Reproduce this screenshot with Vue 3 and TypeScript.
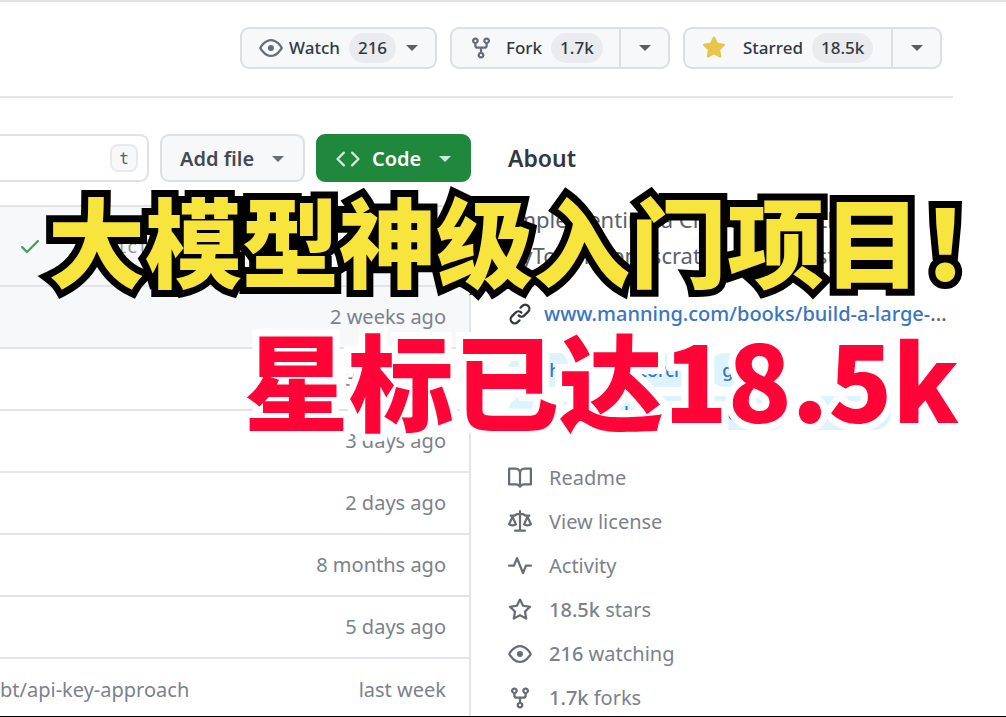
<script setup lang="ts">
interface FileRow { message: string; time: string; latest?: boolean }
interface Stat { icon: string; count?: string; label: string }

const star = 'M8 .25a.75.75 0 0 1 .673.418l1.882 3.815 4.21.612a.75.75 0 0 1 .416 1.279l-3.046 2.97.719 4.192a.751.751 0 0 1-1.088.791L8 12.347l-3.766 1.98a.75.75 0 0 1-1.088-.79l.72-4.194L.818 6.374a.75.75 0 0 1 .416-1.28l4.21-.611L7.327.668A.75.75 0 0 1 8 .25Z'

const icons: Record<string, string> = {
  eye: 'M8 2c1.981 0 3.671.992 4.933 2.078 1.27 1.091 2.187 2.345 2.637 3.023a1.62 1.62 0 0 1 0 1.798c-.45.678-1.367 1.932-2.637 3.023C11.67 13.008 9.981 14 8 14s-3.671-.992-4.933-2.078C1.797 10.83.88 9.576.43 8.898a1.62 1.62 0 0 1 0-1.798c.45-.677 1.367-1.931 2.637-3.022C4.33 2.992 6.019 2 8 2ZM1.679 7.932a.12.12 0 0 0 0 .136c.411.622 1.241 1.75 2.366 2.717C5.176 11.758 6.527 12.5 8 12.5s2.825-.742 3.955-1.715c1.124-.967 1.954-2.096 2.366-2.717a.12.12 0 0 0 0-.136c-.412-.621-1.242-1.75-2.366-2.717C10.824 4.242 9.473 3.5 8 3.5s-2.825.742-3.955 1.715c-1.124.967-1.954 2.096-2.366 2.717ZM8 10a2 2 0 1 1 .001-3.999A2 2 0 0 1 8 10Z',
  fork: 'M5 5.372v.878c0 .414.336.75.75.75h4.5a.75.75 0 0 0 .75-.75v-.878a2.25 2.25 0 1 1 1.5 0v.878a2.25 2.25 0 0 1-2.25 2.25h-1.5v2.128a2.251 2.251 0 1 1-1.5 0V8.5h-1.5A2.25 2.25 0 0 1 3.5 6.25v-.878a2.25 2.25 0 1 1 1.5 0ZM5 3.25a.75.75 0 1 0-1.5 0 .75.75 0 0 0 1.5 0Zm6.75.75a.75.75 0 1 0 0-1.5.75.75 0 0 0 0 1.5Zm-3 8.75a.75.75 0 1 0-1.5 0 .75.75 0 0 0 1.5 0Z',
  starFill: star,
  star: star + 'm0 2.445L6.615 5.5a.75.75 0 0 1-.564.41l-3.097.45 2.24 2.184a.75.75 0 0 1 .216.664l-.528 3.084 2.769-1.456a.75.75 0 0 1 .698 0l2.77 1.456-.53-3.084a.75.75 0 0 1 .216-.664l2.24-2.183-3.096-.45a.75.75 0 0 1-.564-.41L8 2.694Z',
  book: 'M0 1.75A.75.75 0 0 1 .75 1h4.253c1.227 0 2.317.59 3 1.501A3.743 3.743 0 0 1 11.006 1h4.245a.75.75 0 0 1 .75.75v10.5a.75.75 0 0 1-.75.75h-4.507a2.25 2.25 0 0 0-1.591.659l-.622.621a.75.75 0 0 1-1.06 0l-.622-.621A2.25 2.25 0 0 0 5.258 13H.75a.75.75 0 0 1-.75-.75Zm7.251 10.324.004-5.073-.002-2.253A2.25 2.25 0 0 0 5.003 2.5H1.5v9h3.757a3.75 3.75 0 0 1 1.994.574ZM8.755 4.75l-.004 7.322a3.752 3.752 0 0 1 1.992-.572H14.5v-9h-3.495a2.25 2.25 0 0 0-2.25 2.25Z',
  law: 'M8.75.75V2h.985c.304 0 .603.08.867.231l1.29.736c.038.022.08.033.124.033h2.234a.75.75 0 0 1 0 1.5h-.427l2.111 4.692a.75.75 0 0 1-.154.838l-.53-.53.529.531-.001.002-.002.002-.006.006-.006.005-.01.01-.045.04c-.21.176-.441.327-.686.45C14.556 10.78 13.88 11 13 11a4.498 4.498 0 0 1-2.023-.454 3.544 3.544 0 0 1-.686-.45l-.045-.04-.016-.015-.006-.006-.004-.004v-.001a.75.75 0 0 1-.154-.838L12.178 4.5h-.162c-.305 0-.604-.079-.868-.231l-1.29-.736a.245.245 0 0 0-.124-.033H8.75V13h2.5a.75.75 0 0 1 0 1.5h-6.5a.75.75 0 0 1 0-1.5h2.5V3.5h-.984a.245.245 0 0 0-.124.033l-1.289.737c-.265.15-.564.23-.869.23h-.162l2.112 4.692a.75.75 0 0 1-.154.838l-.53-.53.529.531-.001.002-.002.002-.006.006-.016.015-.045.04c-.21.176-.441.327-.686.45C4.556 10.78 3.88 11 3 11a4.498 4.498 0 0 1-2.023-.454 3.544 3.544 0 0 1-.686-.45l-.045-.04-.016-.015-.006-.006-.004-.004v-.001a.75.75 0 0 1-.154-.838L2.178 4.5H1.75a.75.75 0 0 1 0-1.5h2.234a.249.249 0 0 0 .125-.033l1.288-.737c.265-.15.564-.23.869-.23h.984V.75a.75.75 0 0 1 1.5 0Zm2.945 8.477c.285.135.718.273 1.305.273s1.02-.138 1.305-.273L13 6.327Zm-10 0c.285.135.718.273 1.305.273s1.02-.138 1.305-.273L3 6.327Z',
  pulse: 'M6 2c.306 0 .582.187.696.471L10 10.731l1.304-3.26A.751.751 0 0 1 12 7h3.25a.75.75 0 0 1 0 1.5h-2.742l-1.812 4.528a.751.751 0 0 1-1.392 0L6 4.77 4.696 8.03A.75.75 0 0 1 4 8.5H.75a.75.75 0 0 1 0-1.5h2.742l1.812-4.529A.751.751 0 0 1 6 2Z',
  link: 'm7.775 3.275 1.25-1.25a3.5 3.5 0 1 1 4.95 4.95l-2.5 2.5a3.5 3.5 0 0 1-4.95 0 .751.751 0 0 1 .018-1.042.751.751 0 0 1 1.042-.018 1.998 1.998 0 0 0 2.83 0l2.5-2.5a2.002 2.002 0 0 0-2.83-2.83l-1.25 1.25a.751.751 0 0 1-1.042-.018.751.751 0 0 1-.018-1.042Zm-4.69 9.64a1.998 1.998 0 0 0 2.83 0l1.25-1.25a.751.751 0 0 1 1.042.018.751.751 0 0 1 .018 1.042l-1.25 1.25a3.5 3.5 0 1 1-4.95-4.95l2.5-2.5a3.5 3.5 0 0 1 4.95 0 .751.751 0 0 1-.018 1.042.751.751 0 0 1-1.042.018 1.998 1.998 0 0 0-2.83 0l-2.5 2.5a1.998 1.998 0 0 0 0 2.83Z',
  code: 'm11.28 3.22 4.25 4.25a.75.75 0 0 1 0 1.06l-4.25 4.25a.749.749 0 0 1-1.275-.326.749.749 0 0 1 .215-.734L13.94 8l-3.72-3.72a.749.749 0 0 1 .326-1.275.749.749 0 0 1 .734.215Zm-6.56 0a.751.751 0 0 1 1.042.018.751.751 0 0 1 .018 1.042L2.06 8l3.72 3.72a.749.749 0 0 1-.326 1.275.749.749 0 0 1-.734-.215L.47 8.53a.75.75 0 0 1 0-1.06Z',
  check: 'M13.78 4.22a.75.75 0 0 1 0 1.06l-7.25 7.25a.75.75 0 0 1-1.06 0L2.22 9.28a.751.751 0 0 1 .018-1.042.751.751 0 0 1 1.042-.018L6 10.94l6.72-6.72a.75.75 0 0 1 1.06 0Z',
}

const rows: FileRow[] = [
  { message: '', time: '2 weeks ago', latest: true },
  { message: '', time: '3 days ago' },
  { message: '', time: '3 days ago' },
  { message: '', time: '2 days ago' },
  { message: '', time: '8 months ago' },
  { message: '', time: '5 days ago' },
  { message: 'bt/api-key-approach', time: 'last week' },
]

const topicLines: string[][] = [['python', 'pytorch', 'gpt'], ['ai', 'large-language-models', 'chatgpt']]

const stats: Stat[] = [
  { icon: 'book', label: 'Readme' },
  { icon: 'law', label: 'View license' },
  { icon: 'pulse', label: 'Activity' },
  { icon: 'star', count: '18.5k', label: 'stars' },
  { icon: 'eye', count: '216', label: 'watching' },
  { icon: 'fork', count: '1.7k', label: 'forks' },
]
</script>

<template>
  <div class="page">
    <header class="actions">
      <button class="btn watch" type="button">
        <svg class="icon" viewBox="0 0 16 16"><path :d="icons.eye" /></svg>
        <span>Watch</span><span class="counter">216</span><i class="caret"></i>
      </button>
      <div class="group">
        <button class="btn fork" type="button">
          <svg class="icon" viewBox="0 0 16 16"><path :d="icons.fork" /></svg>
          <span>Fork</span><span class="counter">1.7k</span>
        </button>
        <button class="btn more" type="button" aria-label="Fork options"><i class="caret"></i></button>
      </div>
      <div class="group">
        <button class="btn starred" type="button">
          <svg class="icon gold" viewBox="0 0 16 16"><path :d="icons.starFill" /></svg>
          <span>Starred</span><span class="counter">18.5k</span>
        </button>
        <button class="btn more" type="button" aria-label="Star options"><i class="caret"></i></button>
      </div>
    </header>

    <div class="columns">
      <main>
        <div class="toolbar">
          <label class="search">
            <input type="text" aria-label="Go to file" />
            <kbd>t</kbd>
          </label>
          <button class="btn tool" type="button">Add file<i class="caret"></i></button>
          <button class="btn tool code" type="button">
            <svg class="icon" viewBox="0 0 16 16"><path :d="icons.code" /></svg>Code<i class="caret"></i>
          </button>
        </div>
        <div class="files">
          <div class="commit">
            <svg class="icon check" viewBox="0 0 16 16"><path :d="icons.check" /></svg>
            <span class="hash">ict</span>
          </div>
          <table>
            <tbody>
              <tr v-for="(row, i) in rows" :key="i" :class="{ latest: row.latest }">
                <td>{{ row.message }}</td>
                <td class="time">{{ row.time }}</td>
              </tr>
            </tbody>
          </table>
        </div>
      </main>

      <aside>
        <h2>About</h2>
        <p>Implementing a ChatGPT-like LLM in PyTorch from scratch, step by step</p>
        <div class="site">
          <svg class="icon" viewBox="0 0 16 16"><path :d="icons.link" /></svg>
          <a href="#">www.manning.com/books/build-a-large-<span>...</span></a>
        </div>
        <div class="topics">
          <div v-for="(line, i) in topicLines" :key="i" class="line">
            <a v-for="t in line" :key="t" href="#">{{ t }}</a>
          </div>
        </div>
        <ul>
          <li v-for="s in stats" :key="s.label">
            <svg class="icon" viewBox="0 0 16 16"><path :d="icons[s.icon]" /></svg>
            <a href="#"><b v-if="s.count">{{ s.count }}</b> {{ s.label }}</a>
          </li>
        </ul>
      </aside>
    </div>

    <div class="title yellow">大模型神级入门项目！</div>
    <div class="title red">星标已达18.5k</div>
  </div>
</template>

<style>
body { background: #fff; }
</style>

<style scoped>
.page {
  box-sizing: border-box;
  position: relative;
  height: 100vh;
  overflow: hidden;
  border-top: 2px solid #e4e4e4;
  border-bottom: 1px solid #000;
  background: #fff;
  color: #32383f;
  font: 20px/30px "Noto Sans", sans-serif;
}
.page * { box-sizing: border-box; }
.icon { width: 24px; height: 24px; fill: #656d76; flex: none; }
.actions {
  display: flex;
  justify-content: flex-end;
  gap: 13px;
  margin-right: 53px;
  padding: 25px 11px 27px 0;
  border-bottom: 2px solid #e3e5e7;
}
.group { display: flex; }
.btn {
  display: flex;
  align-items: center;
  height: 42px;
  padding: 0;
  border: 2px solid #dbe0e5;
  border-radius: 9px;
  background: #f6f8fa;
  color: #32383f;
  font: 500 17px/24px "Noto Sans", sans-serif;
  white-space: nowrap;
}
.watch { width: 197px; padding-left: 17px; gap: 6px; }
.watch .counter { margin-left: 3px; }
.watch .caret { margin-left: 4px; }
.group .btn:first-child { border-radius: 9px 0 0 9px; }
.group .more { width: 50px; margin-left: -1px; justify-content: center; border-left-width: 1px; border-radius: 0 9px 9px 0; }
.fork { width: 171px; padding-left: 17px; }
.fork .icon { margin-right: 13px; }
.starred { width: 210px; padding-left: 17px; }
.starred .icon { margin-right: 17px; }
.group .counter { margin-left: 9px; }
.gold { fill: #e9c54a; }
.counter { height: 30px; padding: 0 9px; border-radius: 15px; background: #e9ebef; line-height: 29px; }
.caret { width: 0; height: 0; border: 6px solid transparent; border-top-color: currentColor; border-bottom: 0; opacity: .8; }

.columns {
  display: grid;
  grid-template-columns: minmax(0, 1fr) 445px;
  gap: 37px;
  padding: 36px 53px 0 0;
}
.toolbar { display: flex; gap: 11px; margin-bottom: 23px; }
.search {
  display: flex;
  align-items: center;
  flex: 1;
  min-width: 0;
  height: 48px;
  padding-right: 9px;
  border: 2px solid #dfe2e5;
  border-left: 0;
  border-radius: 0 9px 9px 0;
}
.search input { flex: 1; min-width: 0; border: 0; outline: 0; background: none; }
kbd {
  width: 28px;
  height: 28px;
  border: 2px solid #e8eaed;
  border-radius: 8px;
  background: #f6f8fa;
  color: #57606a;
  font: 16px/25px "DejaVu Sans Mono", monospace;
  text-align: center;
}
.tool { width: 145px; height: 48px; padding: 2px 0 0 18px; font-size: 20px; font-weight: 600; color: #424a53; }
.tool .caret { margin-left: 18px; }
.tool.code { width: 155px; border-color: #1f883d; background: #1f883d; color: #fff; }
.tool.code .icon { margin-right: 12px; fill: #d5ead9; }
.files { border-top: 2px solid #e1e4e8; border-right: 2px solid #e1e4e8; }
.commit { display: flex; align-items: center; height: 78px; padding-left: 18px; background: #f6f8fa; color: #8c959f; }
.check { fill: #4a9a61; }
.hash { margin-left: 74px; font: 18px "DejaVu Sans Mono", monospace; }
table { width: 100%; border-collapse: collapse; color: #7a828b; }
tr { height: 62px; border-top: 2px solid #e1e4e8; }
.latest { background: #f6f8fa; }
td { padding: 0; }
.time { padding-right: 23px; text-align: right; }

h2 { margin: 8px 0 27px; font-size: 23px; font-weight: 600; line-height: 32px; }
p { margin: 0 0 26px; font-size: 22px; line-height: 36px; color: #59616a; }
.site { display: flex; align-items: center; gap: 12px; white-space: nowrap; }
.site .icon { fill: #32383f; }
a { color: inherit; text-decoration: none; }
.site a { color: #3a74c4; font-weight: 500; }
.site span { color: #59616a; }
.topics { display: grid; gap: 9px; margin-top: 24px; }
.line { display: flex; gap: 9px; }
.line a { padding: 0 14px; border-radius: 17px; background: #ddf4ff; color: #3a74c4; font-size: 18px; font-weight: 500; line-height: 34px; }
ul { margin: 26px 0 0; padding: 0; list-style: none; color: #7a828b; }
li { display: flex; align-items: center; gap: 17px; height: 44px; }
b { font-weight: 500; }

.title {
  position: absolute;
  white-space: nowrap;
  font-family: "Noto Sans CJK SC", sans-serif;
  font-weight: 900;
  paint-order: stroke fill;
}
.yellow { top: 164px; left: 48px; color: #f7e43d; font-size: 97px; line-height: 144px; -webkit-text-stroke: 14px #000; }
.red { top: 299px; right: 47px; color: #ff0436; font-size: 105px; line-height: 152px; -webkit-text-stroke: 14px #fff; }
</style>
